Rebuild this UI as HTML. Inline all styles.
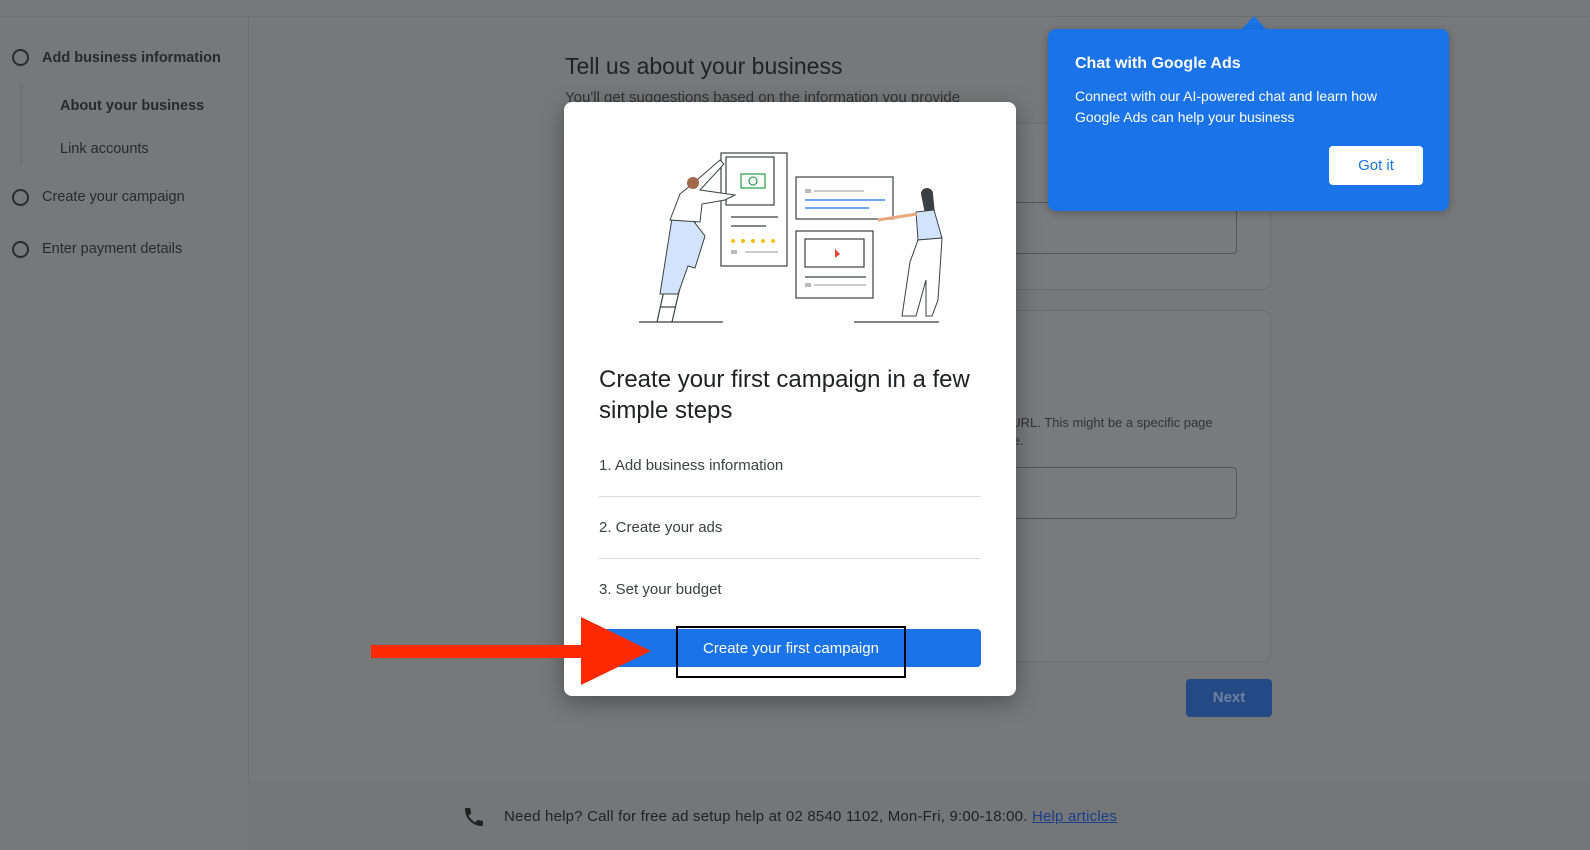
<!DOCTYPE html>
<html><head><style>
*{box-sizing:border-box;margin:0;padding:0}
body{width:1590px;height:850px;overflow:hidden;background:#77787a;font-family:"Liberation Sans",Arial,sans-serif;position:relative;color:#2a2a2a}
.abs{position:absolute}
.card{position:absolute;background:#797a7c;border:1px solid #6d6e70;border-radius:8px}
.circ{position:absolute;width:17px;height:17px;border:2px solid #2c2c2c;border-radius:50%}
.side{position:absolute;font-size:14.5px;color:#2a2a2a}
</style></head><body>
<div class="abs" style="left:0;top:16px;width:1590px;height:1px;background:#6d6e70"></div>
<div class="abs" style="left:248px;top:17px;width:1px;height:833px;background:#6d6e70"></div>
<div class="abs" style="left:21px;top:84px;width:1px;height:82px;background:#6d6e70"></div>
<div class="circ" style="left:12px;top:49px"></div>
<div class="side" style="left:42px;top:50px;font-weight:bold">Add business information</div>
<div class="side" style="left:60px;top:98px;font-weight:bold">About your business</div>
<div class="side" style="left:60px;top:141px">Link accounts</div>
<div class="circ" style="left:12px;top:189px"></div>
<div class="side" style="left:42px;top:189px">Create your campaign</div>
<div class="circ" style="left:12px;top:241px"></div>
<div class="side" style="left:42px;top:241px">Enter payment details</div>

<div class="abs" style="left:565px;top:53px;font-size:23px;color:#222">Tell us about your business</div>
<div class="abs" style="left:565px;top:89px;font-size:15px;color:#333">You'll get suggestions based on the information you provide</div>
<div class="card" style="left:565px;top:123px;width:706px;height:167px"></div>
<div class="abs" style="left:900px;top:202px;width:337px;height:52px;border:1px solid #555;border-radius:4px"></div>
<div class="card" style="left:565px;top:310px;width:706px;height:352px"></div>
<div class="abs" style="left:900px;top:414px;font-size:13px;color:#333;line-height:18px">Enter your website URL. This might be a specific page<br>or social media page.</div>
<div class="abs" style="left:900px;top:467px;width:337px;height:52px;border:1px solid #555;border-radius:4px"></div>
<div class="abs" style="left:1186px;top:679px;width:86px;height:38px;background:#234a85;border-radius:4px;color:#7080a0;font-size:15px;font-weight:bold;text-align:center;line-height:38px">Next</div>

<div class="abs" style="left:248px;top:782px;width:1342px;height:68px;background:#757678;border-top:1px solid #707173"></div>
<svg class="abs" style="left:462px;top:805px" width="24" height="24" viewBox="0 0 24 24"><path fill="#222" d="M6.6 10.8c1.4 2.8 3.8 5.1 6.6 6.6l2.2-2.2c.3-.3.7-.4 1-.2 1.1.4 2.3.6 3.6.6.6 0 1 .4 1 1V20c0 .6-.4 1-1 1C10.6 21 3 13.4 3 4c0-.6.4-1 1-1h3.5c.6 0 1 .4 1 1 0 1.3.2 2.5.6 3.6.1.3 0 .7-.2 1L6.6 10.8z"/></svg>
<div class="abs" style="left:504px;top:808px;font-size:15px;letter-spacing:.2px;color:#222">Need help? Call for free ad setup help at 02 8540 1102, Mon-Fri, 9:00-18:00. <span style="color:#1a3f8a;text-decoration:underline">Help articles</span></div>

<!-- tooltip -->
<div class="abs" style="left:1241px;top:16px;width:0;height:0;border-left:13px solid transparent;border-right:13px solid transparent;border-bottom:14px solid #1a73e8"></div>
<div class="abs" style="left:1048px;top:29px;width:401px;height:182px;background:#1a73e8;border-radius:8px;box-shadow:0 2px 8px rgba(0,0,0,.25);color:#fff">
<div class="abs" style="left:27px;top:26px;font-size:16px;font-weight:bold">Chat with Google Ads</div>
<div class="abs" style="left:27px;top:57px;font-size:14px;line-height:21px">Connect with our AI-powered chat and learn how<br>Google Ads can help your business</div>
<div class="abs" style="left:281px;top:117px;width:94px;height:39px;background:#fff;border-radius:4px;color:#1a73e8;font-size:15px;text-align:center;line-height:39px">Got it</div>
</div>

<!-- modal -->
<div class="abs" style="left:564px;top:102px;width:452px;height:594px;background:#fff;border-radius:8px;box-shadow:0 6px 24px rgba(0,0,0,.35)">
<svg class="abs" style="left:0;top:0" width="452" height="240" viewBox="564 102 452 240">
<g fill="none" stroke="#3c4043" stroke-width="1.2">
<line x1="639" y1="322" x2="723" y2="322"/><line x1="854" y1="322" x2="939" y2="322"/>
<line x1="657" y1="322" x2="683" y2="205"/><line x1="672" y1="322" x2="698" y2="210"/>
<line x1="660" y1="307" x2="675" y2="307"/><line x1="663" y1="292" x2="678" y2="292"/><line x1="667" y1="277" x2="682" y2="277"/><line x1="670" y1="262" x2="685" y2="262"/><line x1="674" y1="247" x2="689" y2="247"/><line x1="677" y1="232" x2="692" y2="232"/>
<rect x="721" y="153" width="66" height="113" fill="#fff"/>
<rect x="726" y="157" width="48" height="48" fill="#fff"/>
<line x1="731" y1="217" x2="778" y2="217"/><line x1="731" y1="226" x2="766" y2="226"/>
<rect x="796" y="177" width="97" height="42" fill="#fff"/>
<rect x="796" y="231" width="77" height="67" fill="#fff"/>
<rect x="805" y="239" width="59" height="28"/>
<line x1="805" y1="277" x2="866" y2="277"/>
</g>
<g stroke="#bbb" stroke-width="1.5"><line x1="745" y1="252" x2="778" y2="252"/><line x1="814" y1="191" x2="864" y2="191"/><line x1="814" y1="285" x2="866" y2="285"/></g>
<g fill="#bbb"><rect x="731" y="250" width="6" height="4"/><rect x="805" y="189" width="6" height="4"/><rect x="805" y="283" width="6" height="4"/></g>
<g stroke="#4285f4" stroke-width="1.5"><line x1="805" y1="200" x2="885" y2="200"/><line x1="805" y1="208" x2="869" y2="208"/></g>
<g fill="#fbbc04"><circle cx="733" cy="241" r="2"/><circle cx="743" cy="241" r="2"/><circle cx="753" cy="241" r="2"/><circle cx="763" cy="241" r="2"/><circle cx="773" cy="241" r="2"/></g>
<rect x="741" y="174" width="24" height="14" fill="none" stroke="#34a853" stroke-width="1.3"/><circle cx="753" cy="181" r="4" fill="none" stroke="#34a853" stroke-width="1.3"/>
<path d="M835 249 L840 254 L835 258Z" fill="#ea4335"/>
<path d="M672 218 L688 214 L705 236 L695 268 L688 266 L678 294 L660 294Z" fill="#d2e3fc" stroke="#3c4043" stroke-width="1"/>
<path d="M670 220 L680 194 L690 186 L720 160 L724 164 L700 190 L735 195 L725 200 L702 204 L700 222 Z" fill="#fff" stroke="#3c4043" stroke-width="1"/>
<circle cx="693" cy="183" r="6" fill="#a0674a"/>
<path d="M921 194 c0-8 12-8 12 0 l2 20 -10 0Z" fill="#3c4043"/>
<path d="M916 212 L934 210 L942 238 L918 240Z" fill="#d2e3fc" stroke="#3c4043" stroke-width="1"/>
<path d="M918 240 L942 238 L938 300 L932 316 L926 316 L926 280 L916 316 L902 316 L910 262Z" fill="#fff" stroke="#3c4043" stroke-width="1"/>
<path d="M878 220 L917 214" stroke="#e8a87c" stroke-width="3"/>
</svg>
<div class="abs" style="left:35px;top:262px;font-size:24px;line-height:31px;color:#202124">Create your first campaign in a few<br>simple steps</div>
<div class="abs" style="left:35px;top:355px;font-size:15px;color:#3c4043">1. Add business information</div>
<div class="abs" style="left:35px;top:394px;width:382px;height:1px;background:#dadce0"></div>
<div class="abs" style="left:35px;top:417px;font-size:15px;color:#3c4043">2. Create your ads</div>
<div class="abs" style="left:35px;top:456px;width:382px;height:1px;background:#dadce0"></div>
<div class="abs" style="left:35px;top:479px;font-size:15px;color:#3c4043">3. Set your budget</div>
<div class="abs" style="left:35px;top:527px;width:382px;height:38px;background:#1a73e8;border-radius:4px"></div>
<div class="abs" style="left:112px;top:524px;width:230px;height:52px;border:2px solid #000;color:#fff;font-size:15px;text-align:center;line-height:42px">Create your first campaign</div>
</div>
<!-- arrow -->
<div class="abs" style="left:371px;top:645px;width:215px;height:13px;background:#ff2a00"></div>
<div class="abs" style="left:581px;top:617px;width:0;height:0;border-top:34px solid transparent;border-bottom:34px solid transparent;border-left:70px solid #ff2a00"></div>
</body></html>
